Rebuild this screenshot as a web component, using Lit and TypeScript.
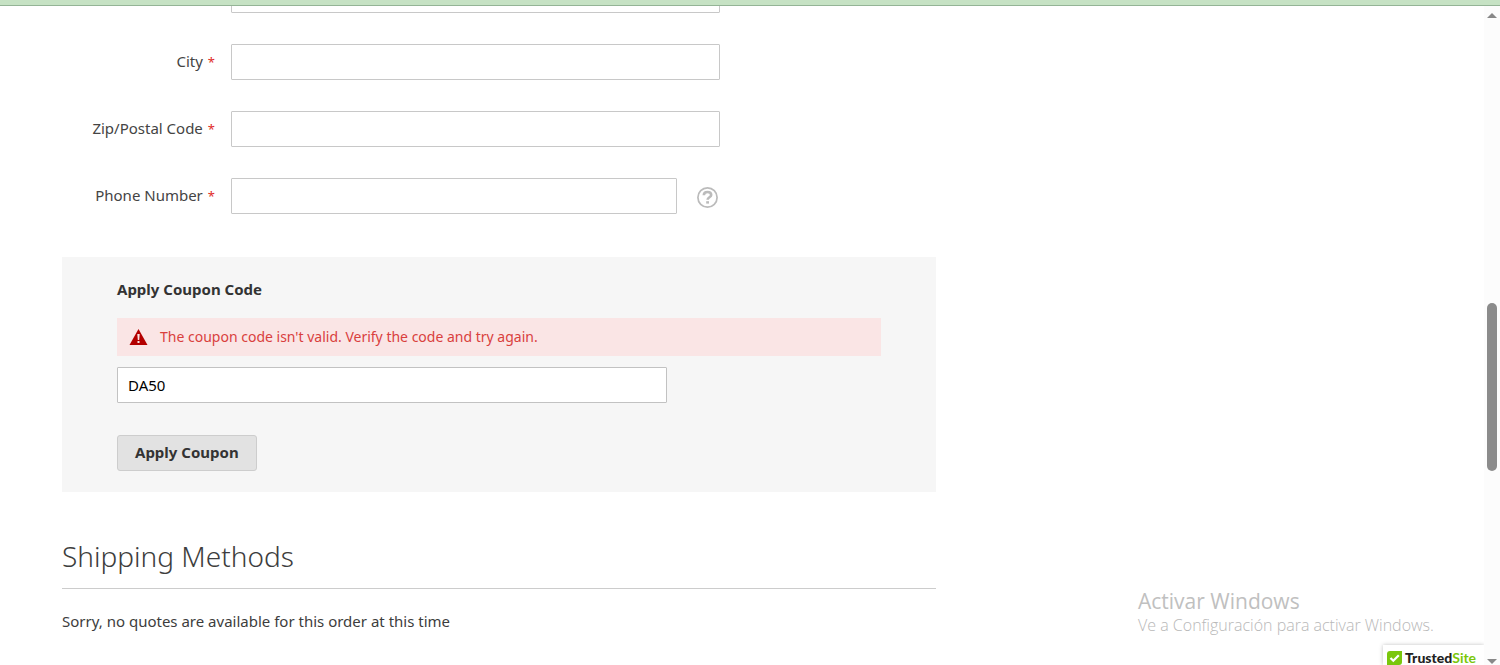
import { LitElement, html, css, svg } from "lit";
import { customElement, property } from "lit/decorators.js";

@customElement("address-field")
class AddressField extends LitElement {
  @property() label = "";
  @property() name = "";
  @property({ type: Boolean }) help = false;

  static styles = css`
    :host {
      display: block;
    }
    .row {
      display: grid;
      grid-template-columns: 153px minmax(0, 1fr);
      column-gap: 16px;
      align-items: center;
    }
    label {
      padding-bottom: 2px;
      text-align: right;
      font-size: 15px;
      line-height: 20px;
      color: #444;
    }
    .star {
      color: #e02b27;
      font-size: 13px;
      margin-left: 5px;
    }
    .control {
      grid-column: 2;
      display: flex;
      align-items: center;
      gap: 20px;
    }
    input {
      box-sizing: border-box;
      flex: 1;
      min-width: 0;
      height: 36px;
      padding: 0 9px;
      border: 1px solid #c8c8c8;
      border-radius: 1px;
      background: #fff;
      font: 15px/20px "Noto Sans", sans-serif;
      outline: none;
    }
    .help {
      display: flex;
      padding: 3px 2px 0 0;
      border: 0;
      background: none;
      cursor: pointer;
    }
  `;

  render() {
    return html`
      <div class="row">
        ${this.label ? html`<label for="field">${this.label}<span class="star">*</span></label>` : ""}
        <div class="control">
          <input id="field" name=${this.name} type="text" aria-label=${this.label || this.name} />
          ${this.help
            ? html`<button class="help" type="button" aria-label="Help">
                <svg width="21" height="21" viewBox="0 0 21 21" fill="none" stroke="#bbb">
                  <circle cx="10.5" cy="10.5" r="9.6" stroke-width="1.7" />
                  <path d="M6.8 8.2C6.9 6 8.4 5 10.5 5C12.6 5 14.2 6 14.2 8C14.2 10.2 10.6 10.3 10.6 12.7" stroke-width="2.6" />
                  <path d="M9.2 14.2H12V16.6H9.2Z" fill="#bbb" stroke="none" />
                </svg>
              </button>`
            : ""}
        </div>
      </div>
    `;
  }
}

@customElement("coupon-form")
class CouponForm extends LitElement {
  static styles = css`
    :host {
      display: block;
    }
    .box {
      padding: 22px 55px 21px;
      background: #f6f6f6;
    }
    h2 {
      margin: 0 0 19px;
      font-size: 15px;
      line-height: 20px;
      font-weight: 700;
      color: #333;
    }
    .message {
      display: flex;
      align-items: center;
      gap: 12px;
      margin-bottom: 11px;
      padding: 9px 12px;
      background: #fae5e5;
      color: #d9403d;
      font-size: 14px;
      line-height: 20px;
    }
    input {
      display: block;
      box-sizing: border-box;
      width: 71.9%;
      height: 36px;
      margin-bottom: 32px;
      padding: 0 10px;
      border: 1px solid #c2c2c2;
      border-radius: 1px;
      background: #fff;
      color: #000;
      font: 15px/20px "Noto Sans", sans-serif;
      outline: none;
    }
    button {
      display: block;
      height: 36px;
      padding: 0 17px 2px;
      border: 1px solid #cdcdcd;
      border-radius: 3px;
      background: #e2e2e2;
      color: #333;
      font: 700 15px/20px "Noto Sans", sans-serif;
      cursor: pointer;
    }
  `;

  render() {
    return html`
      <form class="box" @submit=${(e: Event) => e.preventDefault()}>
        <h2>Apply Coupon Code</h2>
        <div class="message" role="alert">
          <svg width="19" height="16" viewBox="0 0 19 16">
            <path d="M9.5 0L18.5 16H0.5Z" fill="#b30000" />
            <path d="M8.3 5H10.7L10.2 11H8.8ZM8.5 12H10.5V14H8.5Z" fill="#fae5e5" />
          </svg>
          <span>The coupon code isn't valid. Verify the code and try again.</span>
        </div>
        <input type="text" name="coupon" aria-label="Coupon code" .value=${"DA50"} />
        <button type="submit">Apply Coupon</button>
      </form>
    `;
  }
}

@customElement("app-root")
class AppRoot extends LitElement {
  static styles = css`
    :host {
      display: flex;
      flex-direction: column;
      position: relative;
      height: 100vh;
      overflow: hidden;
      background: #fff;
      color: #3d3d3d;
      font-family: "Noto Sans", sans-serif;
    }
    .strip {
      flex: none;
      height: 5px;
      background: #c6e2c4;
      border-bottom: 1px solid #94b496;
    }
    .view {
      flex: 1;
      min-height: 0;
      display: flex;
    }
    main {
      flex: 1;
      min-width: 0;
      overflow: hidden;
      display: grid;
      grid-template-columns: minmax(0, 9fr) minmax(0, 5fr);
      align-items: start;
      padding: 0 62px;
    }
    .fields {
      display: grid;
      gap: 31px;
      width: 75.25%;
      margin-top: -29px;
      margin-bottom: 43px;
    }
    h1 {
      margin: 44px 0 22px;
      padding-bottom: 11px;
      border-bottom: 1px solid #ccc;
      font-size: 28px;
      line-height: 41px;
      font-weight: 300;
    }
    p {
      margin: 0;
      font-size: 15px;
      line-height: 20px;
    }
    .scroll {
      flex: none;
      width: 16px;
      display: flex;
      flex-direction: column;
      align-items: center;
      background: #fcfcfc;
    }
    .up {
      margin-top: 6px;
    }
    .track {
      flex: 1;
      width: 10px;
      display: grid;
      grid-template-rows: 284fr 167fr 187fr;
    }
    .thumb {
      grid-row: 2;
      border-radius: 5px;
      background: #8b8b8b;
    }
    .watermark {
      position: absolute;
      right: 60px;
      bottom: 29px;
      width: 302px;
      color: #c0c0c0;
      font-family: "Open Sans", sans-serif;
      white-space: nowrap;
    }
    .wm-title {
      font-size: 21px;
      line-height: 26px;
    }
    .wm-text {
      font-size: 16px;
      line-height: 22px;
      font-weight: 350;
      color: #b8b8b8;
    }
    .badge {
      position: absolute;
      right: 16px;
      bottom: 0;
      display: flex;
      align-items: center;
      gap: 3px;
      box-sizing: border-box;
      width: 101px;
      height: 20px;
      padding: 6px 0 0 4px;
      background: #fff;
      box-shadow: 0 0 4px rgba(0, 0, 0, 0.25);
      clip-path: inset(-5px 0 0 -5px);
      color: #222;
      font: 900 14px/14px Lato, sans-serif;
      text-decoration: none;
    }
    .badge svg {
      flex: none;
    }
    .site {
      color: #7ac70c;
      font-weight: 700;
    }
  `;

  private arrow(d: string, cls: string) {
    return html`<svg class=${cls} width="12" height="7" viewBox="0 0 12 7">${svg`<path d=${d} fill="#888" />`}</svg>`;
  }

  render() {
    return html`
      <div class="strip"></div>
      <div class="view">
        <main>
          <section>
            <div class="fields">
              <address-field name="region"></address-field>
              <address-field label="City" name="city"></address-field>
              <address-field label="Zip/Postal Code" name="postcode"></address-field>
              <address-field label="Phone Number" name="telephone" help></address-field>
            </div>
            <coupon-form></coupon-form>
            <h1>Shipping Methods</h1>
            <p>Sorry, no quotes are available for this order at this time</p>
          </section>
        </main>
        <div class="scroll" aria-hidden="true">
          ${this.arrow("M6 1L11 6H1Z", "up")}
          <div class="track"><div class="thumb"></div></div>
          ${this.arrow("M6 6L11 1H1Z", "down")}
        </div>
      </div>
      <div class="watermark">
        <div class="wm-title">Activar Windows</div>
        <div class="wm-text">Ve a Configuración para activar Windows.</div>
      </div>
      <a class="badge" href="#">
        <svg width="15" height="14" viewBox="0 0 15 14">
          <path d="M3 0H15V11Q15 14 12 14H0V3Q0 0 3 0Z" fill="#7ac70c" />
          <path d="M3.5 7L6.3 9.8L11.8 4.2" fill="none" stroke="#fff" stroke-width="2.2" />
        </svg>
        <span>Trusted<span class="site">Site</span></span>
      </a>
    `;
  }
}
